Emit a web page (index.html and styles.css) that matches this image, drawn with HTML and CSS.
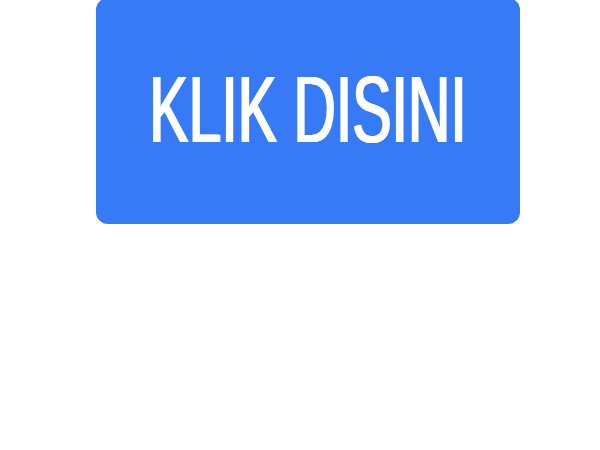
FILE: index.html
```html
<!DOCTYPE html>
<html>
<head>
<meta charset="utf-8">
<link rel="stylesheet" href="styles.css">
</head>
<body>
<div class="page">
  <a class="cta" href="#"><span class="cta-label">KLIK DISINI</span></a>
</div>
</body>
</html>
```
FILE: styles.css
```css
html, body {
  margin: 0;
  padding: 0;
  background: #ffffff;
}
.page {
  width: 600px;
  height: 450px;
  padding-left: 96px;
  box-sizing: border-box;
}
.cta {
  display: flex;
  align-items: center;
  justify-content: center;
  width: 424px;
  height: 226px;
  margin-top: -2px;
  background: #367af6;
  border-radius: 12px;
  text-decoration: none;
}
.cta-label {
  display: inline-block;
  font-family: "Liberation Sans", Arial, sans-serif;
  font-size: 95px;
  line-height: 1;
  color: #ffffff;
  white-space: nowrap;
  transform: scaleX(0.62);
  text-shadow: 1.5px 0 0 #ffffff, -1.5px 0 0 #ffffff;
  margin-top: -4px;
}
```
